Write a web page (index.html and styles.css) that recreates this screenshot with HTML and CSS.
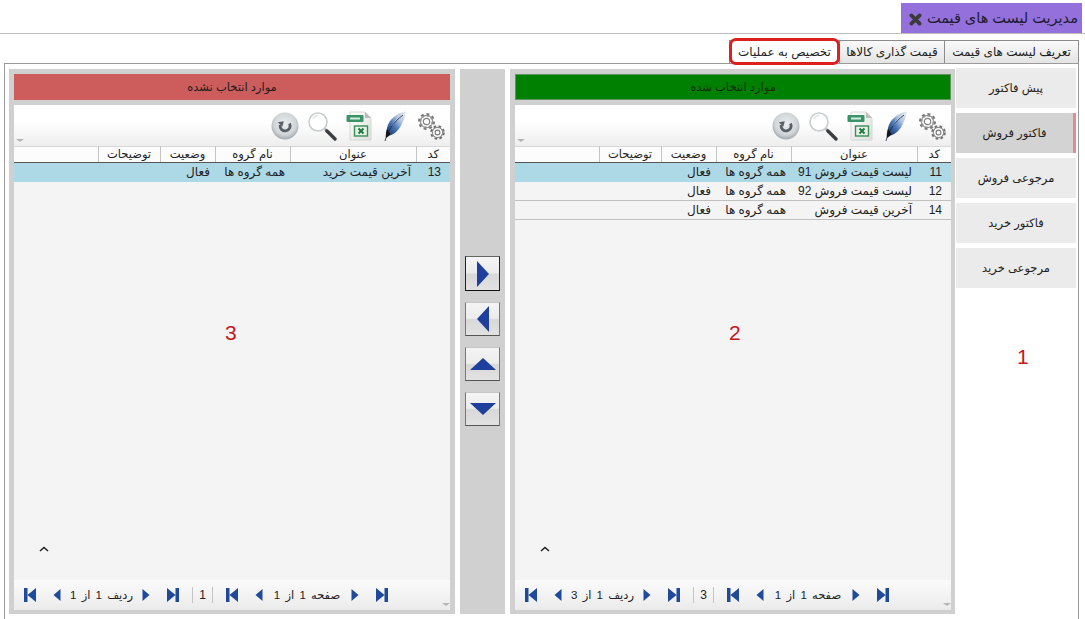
FILE: index.html
```html
<!DOCTYPE html>
<html lang="fa" dir="rtl">
<head>
    <meta charset="utf-8">
    <title>مدیریت لیست های قیمت</title>
    <link rel="stylesheet" href="styles.css">
</head>
<body>
<svg class="defs" xmlns="http://www.w3.org/2000/svg">
    <defs>
        <linearGradient id="gradFeather" x1="1" y1="0" x2="0" y2="1">
            <stop offset="0" stop-color="#eef1f5"/>
            <stop offset="0.35" stop-color="#b4c4de"/>
            <stop offset="0.6" stop-color="#4a78ba"/>
            <stop offset="0.85" stop-color="#27477f"/>
            <stop offset="1" stop-color="#16233f"/>
        </linearGradient>
        <radialGradient id="gradRefresh" cx="0.5" cy="0.42" r="0.58">
            <stop offset="0" stop-color="#eceff0"/>
            <stop offset="0.7" stop-color="#d0d5d8"/>
            <stop offset="1" stop-color="#a2a9ad"/>
        </radialGradient>
        <linearGradient id="gradPage" x1="0" y1="0" x2="1" y2="1">
            <stop offset="0" stop-color="#ffffff"/>
            <stop offset="1" stop-color="#dcdfdc"/>
        </linearGradient>
        <symbol id="ico-gears" viewBox="0 0 30 30">
            <circle cx="10.5" cy="10.5" r="6.8" fill="none" stroke="#7a7a7a" stroke-width="3.4" stroke-dasharray="2.7 2.6"/>
            <circle cx="10.5" cy="10.5" r="6.2" fill="none" stroke="#959595" stroke-width="1.3"/>
            <circle cx="10.5" cy="10.5" r="3.2" fill="#fff" stroke="#808080" stroke-width="1.2"/>
            <circle cx="21.5" cy="21.5" r="5.8" fill="none" stroke="#6e6e6e" stroke-width="3" stroke-dasharray="2.4 2.2"/>
            <circle cx="21.5" cy="21.5" r="5.2" fill="#fff" stroke="#8c8c8c" stroke-width="1.2"/>
            <circle cx="21.5" cy="21.5" r="2.4" fill="#fff" stroke="#777" stroke-width="1.1"/>
        </symbol>
        <symbol id="ico-feather" viewBox="0 0 24 32">
            <path d="M23 1C14 3 6 9 4 18c-.6 3-.4 6 .4 8 6-1 11-5 14-11 2-4 4-9 4.600-14z" fill="url(#gradFeather)"/>
            <path d="M21 4c-5 3-9 7-12 12" fill="none" stroke="#f2f5f9" stroke-width=".9" opacity=".8"/>
            <path d="M2 31C4 22 10 12 20 5" fill="none" stroke="#1a2438" stroke-width=".8"/>
            <path d="M3 28c-.6-2.500 0-6 1-9l3.500 5c-1.500 2-3 3-4.500 4z" fill="#14161a"/>
        </symbol>
        <symbol id="ico-xls" viewBox="0 0 26 30">
            <path d="M4 1h15l6 6v22H4z" fill="url(#gradPage)" stroke="#d4d7d4"/>
            <path d="M19 1v6h6z" fill="#b8bdb9"/>
            <rect x="0.500" y="4" width="17" height="7" rx="1" fill="#3a9468"/>
            <rect x="4" y="6.500" width="10" height="2" fill="#d5ebdf"/>
            <rect x="8.500" y="15" width="13" height="10" fill="#e6f0e6" stroke="#3a8f58" stroke-width="1.400"/>
            <path d="M12.500 17.500l5 5m0-5l-5 5" stroke="#1f7a3d" stroke-width="2"/>
        </symbol>
        <symbol id="ico-search" viewBox="0 0 30 30">
            <circle cx="11" cy="11" r="9" fill="#fff" stroke="#c8cdd0" stroke-width="1.600"/>
            <path d="M6 8c1-2 3-3.500 5.500-3.500" fill="none" stroke="#e6e9eb" stroke-width="2"/>
            <path d="M18 18l2 2" stroke="#9a9a9a" stroke-width="2.500"/>
            <path d="M20 20l8 8" stroke="#3c3f42" stroke-width="3.400" stroke-linecap="round"/>
        </symbol>
        <symbol id="ico-refresh" viewBox="0 0 28 28">
            <circle cx="14" cy="14" r="13.500" fill="url(#gradRefresh)"/>
            <path d="M18.500 11.500a5 5 0 1 1-9.300 1.500" fill="none" stroke="#596067" stroke-width="2.800"/>
            <path d="M6.800 10.200l6-1-1.500 5.500z" fill="#596067"/>
        </symbol>
        <symbol id="ico-first" viewBox="0 0 12 14">
            <path d="M0 0h3.500v14H0zM12 0v14L3.500 7z" fill="#1f4a9c"/>
        </symbol>
        <symbol id="ico-last" viewBox="0 0 12 14">
            <path d="M12 0H8.500v14H12zM0 0v14l8.500-7z" fill="#1f4a9c"/>
        </symbol>
        <symbol id="ico-prev" viewBox="0 0 8 14">
            <path d="M7.500 1v12L.5 7z" fill="#1f4a9c"/>
        </symbol>
        <symbol id="ico-next" viewBox="0 0 8 14">
            <path d="M.5 1v12l7-6z" fill="#1f4a9c"/>
        </symbol>
    </defs>
</svg>

<div class="title-row">
    <div class="title-box">
        <span>مدیریت لیست های قیمت</span>
        <svg class="title-close" viewBox="0 0 12 12"><path d="M2.200 2.200l7.600 7.600m0-7.600l-7.600 7.600" stroke="#3a3a3a" stroke-width="3.400" stroke-linecap="round"/></svg>
    </div>
</div>

<div class="tabs">
    <div class="tab tab-1">تعریف لیست های قیمت</div>
    <div class="tab tab-2">قیمت گذاری کالاها</div>
    <div class="tab tab-3 active">تخصیص به عملیات</div>
</div>

<div class="content">
    <div class="sidebar">
        <div class="side-item">پیش فاکتور</div>
        <div class="side-item selected">فاکتور فروش</div>
        <div class="side-item">مرجوعی فروش</div>
        <div class="side-item">فاکتور خرید</div>
        <div class="side-item">مرجوعی خرید</div>
        <span class="mark mark-1">1</span>
    </div>

    <div class="panel panel-selected">
        <div class="panel-head head-green">موارد انتخاب شده</div>
        <div class="grid-box">
            <div class="toolbar">
                <svg class="t-gears"><use href="#ico-gears"/></svg>
                <svg class="t-feather"><use href="#ico-feather"/></svg>
                <svg class="t-xls"><use href="#ico-xls"/></svg>
                <svg class="t-search"><use href="#ico-search"/></svg>
                <svg class="t-refresh"><use href="#ico-refresh"/></svg>
                <span class="tiny-arrow arrow-toolbar"></span>
            </div>
            <div class="list">
                <table class="grid">
                    <tr>
                        <th class="c-code">کد</th>
                        <th class="c-title">عنوان</th>
                        <th class="c-group">نام گروه</th>
                        <th class="c-state">وضعیت</th>
                        <th class="c-desc">توضیحات</th>
                        <th class="c-rest"></th>
                    </tr>
                    <tr class="row-on">
                        <td class="num">11</td>
                        <td>لیست قیمت فروش 91</td>
                        <td>همه گروه ها</td>
                        <td>فعال</td>
                        <td></td>
                        <td></td>
                    </tr>
                    <tr>
                        <td class="num">12</td>
                        <td>لیست قیمت فروش 92</td>
                        <td>همه گروه ها</td>
                        <td>فعال</td>
                        <td></td>
                        <td></td>
                    </tr>
                    <tr>
                        <td class="num">14</td>
                        <td>آخرین قیمت فروش</td>
                        <td>همه گروه ها</td>
                        <td>فعال</td>
                        <td></td>
                        <td></td>
                    </tr>
                </table>
                <span class="mark mark-2">2</span>
                <svg class="caret" viewBox="0 0 10 6"><path d="M1 5l4-3.500L9 5" fill="none" stroke="#222" stroke-width="1.600"/></svg>
            </div>
            <div class="pager">
                <svg class="p-wide"><use href="#ico-last"/></svg>
                <svg class="p-thin"><use href="#ico-next"/></svg>
                <span class="p-text p-page">صفحه 1 از 1</span>
                <svg class="p-thin"><use href="#ico-prev"/></svg>
                <svg class="p-wide"><use href="#ico-first"/></svg>
                <span class="p-count">3</span>
                <svg class="p-wide"><use href="#ico-last"/></svg>
                <svg class="p-thin"><use href="#ico-next"/></svg>
                <span class="p-text p-row">ردیف 1 از 3</span>
                <svg class="p-thin"><use href="#ico-prev"/></svg>
                <svg class="p-wide"><use href="#ico-first"/></svg>
                <span class="tiny-arrow arrow-pager"></span>
            </div>
        </div>
    </div>

    <div class="gap"></div>

    <div class="mover">
        <button type="button" class="move-btn focused"><svg viewBox="0 0 14 26"><path d="M1 0v26l12-13z"/></svg></button>
        <button type="button" class="move-btn"><svg viewBox="0 0 14 26"><path d="M13 0v26L1 13z"/></svg></button>
        <button type="button" class="move-btn"><svg class="wide" viewBox="0 0 26 14"><path d="M0 13h26L13 1z"/></svg></button>
        <button type="button" class="move-btn"><svg class="wide" viewBox="0 0 26 14"><path d="M0 1h26L13 13z"/></svg></button>
    </div>

    <div class="gap"></div>

    <div class="panel panel-free">
        <div class="panel-head head-red">موارد انتخاب نشده</div>
        <div class="grid-box">
            <div class="toolbar">
                <svg class="t-gears"><use href="#ico-gears"/></svg>
                <svg class="t-feather"><use href="#ico-feather"/></svg>
                <svg class="t-xls"><use href="#ico-xls"/></svg>
                <svg class="t-search"><use href="#ico-search"/></svg>
                <svg class="t-refresh"><use href="#ico-refresh"/></svg>
                <span class="tiny-arrow arrow-toolbar"></span>
            </div>
            <div class="list">
                <table class="grid">
                    <tr>
                        <th class="c-code">کد</th>
                        <th class="c-title">عنوان</th>
                        <th class="c-group">نام گروه</th>
                        <th class="c-state">وضعیت</th>
                        <th class="c-desc">توضیحات</th>
                        <th class="c-rest"></th>
                    </tr>
                    <tr class="row-on">
                        <td class="num">13</td>
                        <td>آخرین قیمت خرید</td>
                        <td>همه گروه ها</td>
                        <td>فعال</td>
                        <td></td>
                        <td></td>
                    </tr>
                </table>
                <span class="mark mark-3">3</span>
                <svg class="caret" viewBox="0 0 10 6"><path d="M1 5l4-3.500L9 5" fill="none" stroke="#222" stroke-width="1.600"/></svg>
            </div>
            <div class="pager">
                <svg class="p-wide"><use href="#ico-last"/></svg>
                <svg class="p-thin"><use href="#ico-next"/></svg>
                <span class="p-text p-page">صفحه 1 از 1</span>
                <svg class="p-thin"><use href="#ico-prev"/></svg>
                <svg class="p-wide"><use href="#ico-first"/></svg>
                <span class="p-count">1</span>
                <svg class="p-wide"><use href="#ico-last"/></svg>
                <svg class="p-thin"><use href="#ico-next"/></svg>
                <span class="p-text p-row">ردیف 1 از 1</span>
                <svg class="p-thin"><use href="#ico-prev"/></svg>
                <svg class="p-wide"><use href="#ico-first"/></svg>
                <span class="tiny-arrow arrow-pager"></span>
            </div>
        </div>
    </div>
</div>
</body>
</html>
```

FILE: styles.css
```css
html, body {
    margin: 0;
    height: 619px;
    overflow: hidden;
    background-color: #fff;
}

body {
    font-family: "Liberation Sans", "DejaVu Sans", sans-serif;
    font-size: 11.5px;
    color: #222;
}

.defs {
    display: block;
    width: 0;
    height: 0;
}

/* title */
.title-row {
    height: 33px;
    border-bottom: 1px solid #bdbdbd;
    display: flex;
}

.title-box {
    margin-top: 3px;
    margin-right: 3px;
    width: 181px;
    height: 30px;
    box-sizing: border-box;
    padding: 0 4px 0 8px;
    background-color: #9370db;
    display: flex;
    align-items: center;
    justify-content: space-between;
    font-size: 14.5px;
    color: #1c1c2c;
}

.title-close {
    width: 13px;
    height: 13px;
    margin-top: 2px;
}

/* tabs */
.tabs {
    display: flex;
    height: 23px;
    margin-top: 6px;
    padding-right: 6px;
}

.tab {
    box-sizing: border-box;
    height: 23px;
    border: 1px solid #8c8c8c;
    border-bottom: none;
    margin-right: -1px;
    background: linear-gradient(#fafafa, #e4e4e4);
    text-align: center;
    line-height: 22px;
    font-size: 12px;
    white-space: nowrap;
}

.tab:first-child {
    margin-right: 0;
}

.tab-1 { width: 135px; }
.tab-2 { width: 106px; }
.tab-3 { width: 111px; }

.tab.active {
    position: relative;
    background: #fff;
}

.tab.active::after {
    content: "";
    position: absolute;
    left: -1px;
    right: -1px;
    top: -3px;
    bottom: -2px;
    border: 3px solid #dc1f1f;
    border-radius: 7px;
}

/* main box */
.content {
    display: flex;
    box-sizing: border-box;
    height: 556px;
    margin: 0 6px 0 4px;
    padding: 5px 0 0 4px;
    border: 1px solid #9a9a9a;
    border-bottom: none;
    background-color: #fff;
}

.sidebar {
    position: relative;
    width: 123px;
    flex: none;
    box-sizing: border-box;
    padding: 0 2px 0 1px;
    display: flex;
    flex-direction: column;
    gap: 5px;
    margin-top: -1px;
}

.side-item {
    height: 40px;
    background-color: #ebebeb;
    text-align: center;
    line-height: 40px;
}

.side-item.selected {
    background-color: #d3d3d3;
    border-right: 3px solid #e88a8a;
}

.mark {
    position: absolute;
    font-family: "Liberation Sans", sans-serif;
    font-size: 21px;
    color: #c8161d;
    line-height: 24px;
}

.mark-1 { left: 62px; top: 277px; }
.mark-2 { left: 214px; top: 175px; }
.mark-3 { left: 211px; top: 175px; }

/* panels */
.panel {
    flex: none;
    box-sizing: border-box;
    height: 545px;
    background-color: #d0d0d0;
    display: flex;
    flex-direction: column;
    gap: 5px;
    padding-top: 5px;
    padding-bottom: 4px;
}

.panel-selected {
    width: 445px;
    padding-right: 4px;
    padding-left: 5px;
}

.panel-free {
    width: 446px;
    padding-right: 5px;
    padding-left: 5px;
}

.panel-head {
    height: 26px;
    flex: none;
    box-sizing: border-box;
    border: 1px solid #9aa89a;
    text-align: center;
    line-height: 24px;
    color: #1d1d1d;
}

.head-green { background-color: #008000; border-color: #5f955f; color: #0f2a0f; }
.head-red { background-color: #cd5c5c; border-color: #cd5c5c; }

.gap {
    width: 5px;
    flex: none;
}

.mover {
    width: 45px;
    height: 545px;
    flex: none;
    background-color: #d0d0d0;
    display: flex;
    flex-direction: column;
    align-items: center;
    gap: 11px;
    padding-top: 187px;
    box-sizing: border-box;
}

.move-btn {
    width: 35px;
    height: 34px;
    padding: 0;
    display: flex;
    align-items: center;
    justify-content: center;
    background: linear-gradient(#f4f4f4 0, #ececec 48%, #d8d8d8 52%, #e2e2e2 100%);
    border: 1px solid #c6c6c6;
    border-bottom-color: #555;
    border-right-color: #777;
    border-left-color: #777;
}

.move-btn.focused {
    border-color: #666;
    border-bottom-color: #111;
    border-right-color: #222;
    border-left-color: #222;
    height: 35px;
}

.move-btn svg {
    width: 14px;
    height: 26px;
    fill: #1f3f9e;
}

.move-btn svg.wide {
    width: 26px;
    height: 14px;
}

/* grid */
.grid-box {
    flex: 1;
    display: flex;
    flex-direction: column;
    min-height: 0;
    background-color: #f4f4f4;
}

.toolbar {
    position: relative;
    height: 41px;
    flex: none;
    box-sizing: border-box;
    padding-right: 4px;
    display: flex;
    align-items: center;
    background: linear-gradient(#fff 40%, #eeeeee);
}

.toolbar svg {
    flex: none;
}

.t-gears { width: 30px; height: 30px; margin-left: 9px; }
.t-feather { width: 24px; height: 32px; margin-left: 11px; }
.t-xls { width: 26px; height: 30px; margin-left: 9px; }
.t-search { width: 30px; height: 30px; margin-left: 8px; }
.t-refresh { width: 28px; height: 28px; }

.tiny-arrow {
    position: absolute;
    width: 0;
    height: 0;
    border-left: 4px solid transparent;
    border-right: 4px solid transparent;
    border-top: 3px solid #b5b5b5;
}

.arrow-toolbar { left: 2px; bottom: 4px; }
.arrow-pager { left: 428px; bottom: 4px; }

.list {
    position: relative;
    flex: 1;
    min-height: 0;
}

.grid {
    width: 100%;
    table-layout: fixed;
    border-collapse: collapse;
}

.grid th {
    box-sizing: border-box;
    height: 16px;
    padding: 0 0 1px 0;
    font-weight: normal;
    text-align: center;
    background-color: #fcfcfc;
    border-top: 1px solid #d8d8d8;
    border-bottom: 1px solid #555;
    border-left: 1px solid #c4c4c4;
    white-space: nowrap;
}

.c-code { width: 34px; }
.c-title { width: 126px; }
.c-group { width: 75px; }
.c-state { width: 55px; }
.c-desc { width: 62px; }

.grid th.c-rest {
    border-left: none;
}

.grid td {
    height: 18px;
    padding: 0 5px 0 0;
    border-bottom: 1px solid #c0c0c0;
    white-space: nowrap;
    overflow: hidden;
    font-size: 12px;
}

.grid td.num {
    padding-right: 9px;
    font-size: 12px;
}

.grid tr.row-on td {
    background-color: #add8e6;
    border-bottom-color: #add8e6;
}

.caret {
    position: absolute;
    left: 25px;
    bottom: 28px;
    width: 10px;
    height: 6px;
}

/* pager */
.pager {
    position: relative;
    height: 30px;
    flex: none;
    box-sizing: border-box;
    padding-right: 62px;
    display: flex;
    align-items: center;
    background: linear-gradient(#fbfbfb, #ebebeb);
}

.pager svg {
    flex: none;
    height: 14px;
}

.p-wide { width: 12px; }
.p-thin { width: 8px; }

.pager .p-wide + .p-thin { margin-right: 17px; }
.pager .p-thin + .p-wide { margin-right: 17px; }

.p-text {
    font-size: 11.5px;
    word-spacing: 2px;
    text-align: center;
    white-space: nowrap;
    flex: none;
}

.p-page { width: 88px; }
.p-row { width: 81px; }

.p-count {
    width: 21px;
    margin: 0 13px;
    height: 16px;
    line-height: 16px;
    text-align: center;
    border-right: 1px solid #c4c4c4;
    border-left: 1px solid #c4c4c4;
    font-size: 12px;
    flex: none;
    box-sizing: border-box;
}
```
